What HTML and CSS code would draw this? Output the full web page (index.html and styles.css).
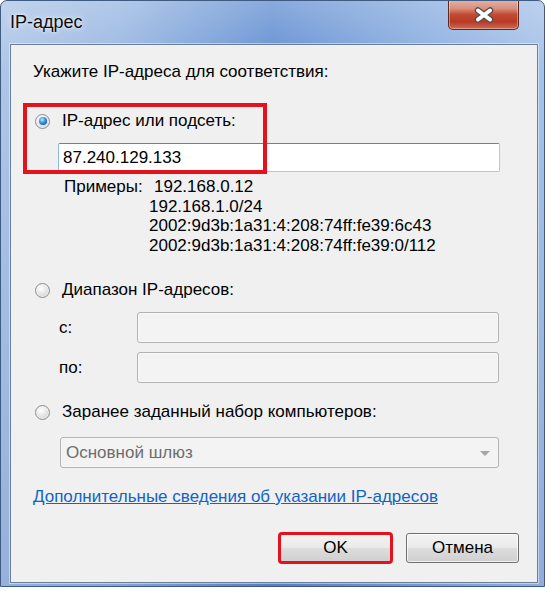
FILE: index.html
```html
<!DOCTYPE html>
<html lang="ru">
<head>
<meta charset="utf-8">
<title>IP-адрес</title>
<link rel="stylesheet" href="styles.css">
</head>
<body>
<div class="window">
  <div class="titlebar">
    <span class="title">IP-адрес</span>
    <div class="close">
      <svg width="22" height="16" viewBox="0 0 22 16">
        <path d="M5 3.5 L17 12.5 M17 3.5 L5 12.5" stroke="#4f4f4f" stroke-width="6.4" stroke-linecap="round" fill="none"/>
        <path d="M5 3.5 L17 12.5 M17 3.5 L5 12.5" stroke="#ffffff" stroke-width="4" stroke-linecap="round" fill="none"/>
      </svg>
    </div>
  </div>
  <div class="client">
    <div class="heading">Укажите IP-адреса для соответствия:</div>

    <div class="group">
      <div class="option">
        <span class="radio checked"><span class="dot"></span></span>
        <span class="label">IP-адрес или подсеть:</span>
      </div>
      <div class="field focused">87.240.129.133</div>
      <div class="annot"></div>
    </div>

    <div class="examples">
      <span class="ex-label">Примеры:</span>
      <div class="ex-values">
        <div class="ex-first">192.168.0.12</div>
        <div>192.168.1.0/24</div>
        <div>2002:9d3b:1a31:4:208:74ff:fe39:6c43</div>
        <div>2002:9d3b:1a31:4:208:74ff:fe39:0/112</div>
      </div>
    </div>

    <div class="option range-opt">
      <span class="radio"></span>
      <span class="label">Диапазон IP-адресов:</span>
    </div>
    <div class="range-row first-range">
      <span class="range-label">с:</span>
      <div class="field disabled range-field"></div>
    </div>
    <div class="range-row second-range">
      <span class="range-label">по:</span>
      <div class="field disabled range-field"></div>
    </div>

    <div class="option preset-opt">
      <span class="radio"></span>
      <span class="label">Заранее заданный набор компьютеров:</span>
    </div>
    <div class="select">
      <span class="select-text">Основной шлюз</span>
      <span class="arrow"></span>
    </div>

    <a class="link" href="#">Дополнительные сведения об указании IP-адресов</a>

    <div class="buttons">
      <div class="btn ok">OK</div>
      <div class="btn">Отмена</div>
    </div>
  </div>
</div>
</body>
</html>
```
FILE: styles.css
```css
html, body {
  margin: 0;
  padding: 0;
  background: #ffffff;
}

body {
  font-family: "Liberation Sans", Arial, sans-serif;
  font-size: 17px;
  color: #000;
}

.window {
  width: 545px;
  height: 587px;
  box-sizing: border-box;
  border: 1px solid #3f5b82;
  border-radius: 7px 7px 0 0;
  background:
    linear-gradient(to bottom, rgba(255,255,255,0.28) 0%, rgba(255,255,255,0.05) 12%, rgba(20,50,130,0.12) 100%),
    linear-gradient(to right, #a9c3e7 0%, #93b3e0 22%, #5b89cf 50%, #84a9de 78%, #a2bfe8 100%);
  display: flex;
  flex-direction: column;
  overflow: hidden;
}

.titlebar {
  height: 43px;
  display: flex;
  align-items: flex-start;
  flex-shrink: 0;
}

.title {
  font-size: 18px;
  line-height: 20px;
  margin-top: 11px;
  margin-left: 9px;
  color: #0c0c0c;
  text-shadow: 0 0 6px rgba(255,255,255,0.9), 0 0 2px rgba(255,255,255,0.8);
}

.close {
  margin-left: auto;
  margin-right: 25px;
  margin-top: -1px;
  width: 71px;
  height: 30px;
  box-sizing: border-box;
  border: 1px solid #5d2a22;
  border-top: none;
  border-radius: 0 0 5px 5px;
  background: linear-gradient(to bottom, #e6b3a6 0%, #d88e7c 30%, #c24a32 50%, #b83b26 75%, #cf6a4f 100%);
  box-shadow: inset 0 0 0 1px rgba(255,255,255,0.35);
  display: flex;
  align-items: center;
  justify-content: center;
}

.close svg {
  display: block;
  margin-top: 1px;
}

.client {
  flex: 1;
  margin: 0 6px 3px 9px;
  background: #f0f0f0;
  border: 1px solid #6b7f9b;
  box-shadow: 0 0 0 1px rgba(255,255,255,0.45);
  padding: 17px 18px 0 22px;
  display: flex;
  flex-direction: column;
  align-items: flex-start;
}

.heading {
  line-height: 20px;
}

.group {
  position: relative;
  margin-top: 29px;
  align-self: stretch;
}

.annot {
  position: absolute;
  left: -10px;
  top: -8px;
  width: 244px;
  height: 71px;
  box-sizing: border-box;
  border: 4px solid #e3121c;
}

.option {
  display: flex;
  align-items: center;
  height: 20px;
  line-height: 20px;
}

.radio {
  width: 15px;
  height: 15px;
  margin-left: 2px;
  margin-right: 12px;
  border-radius: 50%;
  box-sizing: border-box;
  border: 1px solid #8c8c8c;
  background: radial-gradient(circle at 40% 35%, #ffffff 0%, #ececec 35%, #c9c9c9 100%);
  box-shadow: inset 0 0 0 1px rgba(255,255,255,0.6);
  display: flex;
  align-items: center;
  justify-content: center;
  flex-shrink: 0;
}

.radio .dot {
  width: 8px;
  height: 8px;
  border-radius: 50%;
  background: radial-gradient(circle at 40% 35%, #c4ecff 0%, #3d9be6 40%, #1257a6 80%, #0c3c78 100%);
}

.field {
  box-sizing: border-box;
  height: 29px;
  border-radius: 2px;
  line-height: 27px;
  padding-left: 4px;
}

.field.focused {
  margin-top: 12px;
  margin-left: 25px;
  width: 442px;
  background: #fff;
  border: 1px solid #a8cbe6;
  border-top-color: #4f88bf;
  border-left-color: #8fb8dc;
}

.field.disabled {
  background: #f3f3f3;
  border: 1px solid #b2b2b2;
  box-shadow: inset 0 0 0 1px #f9f9f9;
  border-radius: 3px;
  height: 31px;
}

.examples {
  display: flex;
  margin-top: 5px;
  margin-left: 31px;
  line-height: 19.5px;
}

.ex-label {
  width: 85px;
  flex-shrink: 0;
}

.ex-first {
  margin-left: 5px;
}

.range-opt {
  margin-top: 25px;
}

.range-row {
  display: flex;
  align-items: center;
  align-self: stretch;
}

.first-range {
  margin-top: 12px;
}

.second-range {
  margin-top: 9px;
}

.range-label {
  width: 78px;
  margin-left: 26px;
}

.range-field {
  width: 362px;
}

.preset-opt {
  margin-top: 19px;
}

.select {
  margin-top: 15px;
  margin-left: 27px;
  width: 439px;
  height: 31px;
  box-sizing: border-box;
  border: 1px solid #b2b2b2;
  border-radius: 3px;
  background: #f3f3f3;
  box-shadow: inset 0 0 0 1px #f9f9f9;
  display: flex;
  align-items: center;
  padding: 0 8px 0 5px;
}

.select-text {
  color: #6d6d6d;
  flex: 1;
}

.arrow {
  width: 0;
  height: 0;
  border-left: 5px solid transparent;
  border-right: 5px solid transparent;
  border-top: 5px solid #a5a5a5;
  margin-top: 2px;
}

.link {
  margin-top: 19px;
  line-height: 20px;
  color: #0f64c8;
  text-decoration: underline;
}

.buttons {
  display: flex;
  gap: 14px;
  margin-top: 26px;
  align-self: flex-end;
}

.btn {
  width: 113px;
  height: 30px;
  box-sizing: border-box;
  border: 1px solid #707070;
  border-radius: 3px;
  background: linear-gradient(to bottom, #f3f3f3 0%, #ebebeb 48%, #dddddd 52%, #cfcfcf 100%);
  box-shadow: inset 0 0 0 1px rgba(255,255,255,0.7);
  display: flex;
  align-items: center;
  justify-content: center;
  font-size: 17px;
}

.btn.ok {
  outline: 3px solid #e3121c;
  outline-offset: -2px;
}
```
